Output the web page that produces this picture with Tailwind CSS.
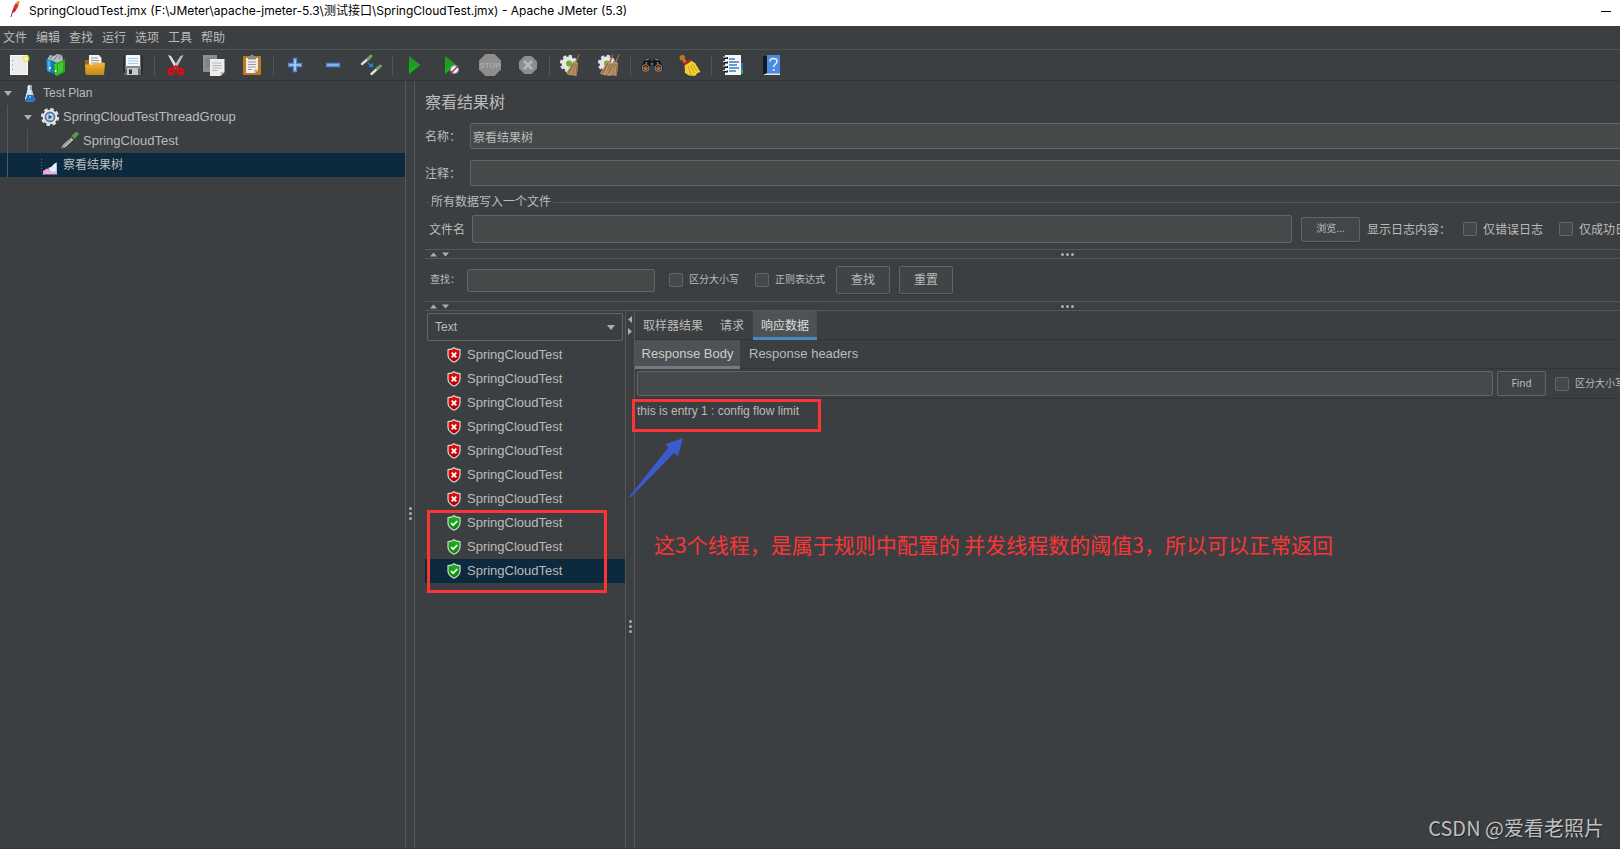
<!DOCTYPE html>
<html lang="zh-CN">
  <head>
    <meta charset="UTF-8" />
    <meta name="viewport" content="width=device-width, initial-scale=1.0" />
    <title>SpringCloudTest.jmx - Apache JMeter (5.3)</title>
    <script src="https://cdn.jsdelivr.net/npm/@tailwindcss/browser@4"></script>
  </head>
  <body class="relative flex h-screen flex-col overflow-hidden bg-[#3c3f41] font-['Liberation_Sans','Noto_Sans_CJK_SC',sans-serif] text-xs text-[#bbbbbb]">
    <!-- Shared icons -->
    <svg class="absolute size-0">
      <defs>
        <linearGradient id="red" x1="0" y1="0" x2="0" y2="1">
          <stop offset="0" stop-color="#e81212" />
          <stop offset="1" stop-color="#a80000" />
        </linearGradient>
        <linearGradient id="green" x1="0" y1="0" x2="0" y2="1">
          <stop offset="0" stop-color="#20b520" />
          <stop offset="1" stop-color="#078307" />
        </linearGradient>
        <linearGradient id="play" x1="0" y1="0" x2="0" y2="1">
          <stop offset="0" stop-color="#2f8f2f" />
          <stop offset="0.5" stop-color="#1ba01b" />
          <stop offset="1" stop-color="#09c409" />
        </linearGradient>
        <linearGradient id="gold" x1="0" y1="0" x2="0" y2="1">
          <stop offset="0" stop-color="#f0b63c" />
          <stop offset="1" stop-color="#c98612" />
        </linearGradient>
      </defs>
      <symbol id="fail" viewBox="0 0 14 16">
        <path d="M7 .8C5.300 2.200 3.200 2.600 1 2.700V8c0 3.300 2.500 5.700 6 7.200 3.500-1.500 6-3.900 6-7.200V2.700C10.800 2.600 8.700 2.200 7 .8z" fill="url(#red)" stroke="#d8d4d4" stroke-width="1.200" />
        <path d="M4.700 5.700l4.600 4.600M9.300 5.700l-4.600 4.600" stroke="#fff" stroke-width="1.800" />
      </symbol>
      <symbol id="pass" viewBox="0 0 14 16">
        <path d="M7 .8C5.300 2.200 3.200 2.600 1 2.700V8c0 3.300 2.500 5.700 6 7.200 3.500-1.500 6-3.900 6-7.200V2.700C10.800 2.600 8.700 2.200 7 .8z" fill="url(#green)" stroke="#ccd8cc" stroke-width="1.200" />
        <path d="M4 8l2.200 2.200L10.200 6" fill="none" stroke="#fff" stroke-width="1.700" />
      </symbol>
      <symbol id="gear" viewBox="0 0 20 20">
        <circle cx="10" cy="10" r="7.300" fill="#e6e6e6" />
        <circle cx="10" cy="10" r="7.800" fill="none" stroke="#e2e2e2" stroke-width="2.600" stroke-dasharray="3.500 2.626" />
      </symbol>
      <symbol id="brush" viewBox="0 0 14 22">
        <path d="M12.500 0l1 .6-3 8.400-1.600-.6z" fill="#8d7049" />
        <path d="M7.500 7l4.500 2-.3 6-1.200 7-3.300-.6L3 21l-3-1.800L4 13z" fill="#b8946a" />
        <path d="M8 9L3 20M9.500 10L6.500 21M11 10l-1 11M7 10l-5 9" stroke="#8a6640" stroke-width=".8" fill="none" />
      </symbol>
    </svg>

    <!-- Title bar -->
    <header class="flex h-[26px] shrink-0 items-center bg-white pr-[9px] pl-[9px] font-['Inter','Noto_Sans_CJK_SC',sans-serif] text-black">
      <svg class="mb-2 h-[18px] w-3" viewBox="0 0 12 18">
        <path d="M10.500 1C7.500 1.500 5.500 4 4.500 7.500L3.200 12l2 .3C7.500 10 10 6 10.500 1z" fill="#d9342b" />
        <path d="M10.500 1C9 1.200 7.700 2 6.700 3.300L9.600 5C10.100 3.700 10.400 2.300 10.500 1z" fill="#f0992a" />
        <path d="M4.300 8.500L3 12.300l2 .3 2.300-2.900z" fill="#b3245c" />
        <path d="M3.500 12L2 17" stroke="#6a2a6e" stroke-width="1" />
      </svg>
      <h1 class="mb-1 ml-2 flex-1 whitespace-nowrap leading-5">SpringCloudTest.jmx (F:\JMeter\apache-jmeter-5.3\测试接口\SpringCloudTest.jmx) - Apache JMeter (5.3)</h1>
      <button class="mb-1 flex h-4 w-5 items-center justify-center pl-[9px]" aria-label="Minimize"><span class="h-px w-[10px] shrink-0 bg-black"></span></button>
    </header>

    <!-- Menu -->
    <nav class="flex h-6 shrink-0 items-center gap-[9px] border-b border-[#515456] pl-[3px] whitespace-nowrap">
      <button>文件</button>
      <button>编辑</button>
      <button>查找</button>
      <button>运行</button>
      <button>选项</button>
      <button>工具</button>
      <button>帮助</button>
    </nav>

    <!-- Toolbar -->
    <div class="flex h-[31px] shrink-0 items-center border-b border-[#323537]">
      <button class="flex w-[38px] justify-center" aria-label="New">
        <svg class="size-6" viewBox="0 0 24 24">
          <rect x="3.500" y="2.500" width="17" height="19" fill="#ececec" stroke="#fafafa" />
          <path d="M5.500 7v1M5.500 11.500v1M5.500 16v1" stroke="#888" />
          <circle cx="19" cy="5.500" r="3.500" fill="#f3e34c" opacity=".75" />
          <circle cx="19" cy="5.500" r="1.500" fill="#fffbd0" />
        </svg>
      </button>
      <button class="flex w-[38px] justify-center" aria-label="Templates">
        <svg class="size-6" viewBox="0 0 24 24">
          <path d="M2 7l3-5 4 1 3-2 5 1 1 6-8 4z" fill="#b4bdc0" />
          <path d="M5 6l3-4M9 7l4-5M14 6l2-4" stroke="#6d777b" />
          <path d="M1 6l8 2v13l-7-3z" fill="#1278b8" />
          <path d="M2.500 7l3 1v11l-3-1z" fill="#45b2ea" />
          <path d="M9 9l4 1v13l-4-2z" fill="#0b6d18" />
          <path d="M9 11l4-1.500V23l-3-1z" fill="#3ec92c" />
          <path d="M12 10l8-4v13l-8 4z" fill="#28a51c" />
          <path d="M13 11l5-2.500V18l-5 3z" fill="#43c832" />
          <circle cx="5" cy="15" r="1" fill="#fff" />
          <circle cx="10.500" cy="18" r="1" fill="#fff" />
        </svg>
      </button>
      <button class="flex w-[38px] justify-center" aria-label="Open">
        <svg class="size-6" viewBox="0 0 24 24">
          <path d="M2 7h6l1 2h12v12H2z" fill="#9f6a0b" />
          <path d="M6 2h10l2.500 3v9H6z" fill="#f2f2f2" />
          <path d="M8 5h7M8 7.500h8M8 10h8" stroke="#9b9b9b" />
          <path d="M2 11.500h8l2-1.500h10l-1 12H3z" fill="url(#gold)" />
        </svg>
      </button>
      <button class="flex w-[38px] justify-center" aria-label="Save">
        <svg class="size-6" viewBox="0 0 24 24">
          <path d="M2 3h20v19H4l-2-2z" fill="#66696c" />
          <path d="M2 3h2v17H2zM20 3h2v19h-2z" fill="#2c2e30" />
          <path d="M4 13h16v3H4z" fill="#85888a" />
          <rect x="5" y="2" width="14" height="11" fill="#f3f8fc" />
          <path d="M7 5.500h10M7 8h10M7 10.500h10" stroke="#a9c8e2" />
          <rect x="6" y="15" width="11" height="7" fill="#c9c9c9" />
          <rect x="8" y="16.500" width="3" height="4.500" fill="#333" />
        </svg>
      </button>
      <span class="flex w-[5px] justify-center"><i class="h-[21px] w-px bg-[#515456]"></i></span>
      <button class="flex w-[38px] justify-center" aria-label="Cut">
        <svg class="size-6" viewBox="0 0 24 24">
          <path d="M4 2l3 1 7 11-2.500 2z" fill="#e2e2e2" />
          <path d="M19.500 2l-3 1-7 11 2.500 2z" fill="#bfbfbf" />
          <g fill="none" stroke="#d90e14" stroke-width="2.600">
            <ellipse cx="7" cy="18.500" rx="3" ry="2.600" transform="rotate(-35 7 18.500)" />
            <ellipse cx="16.500" cy="18.500" rx="3" ry="2.600" transform="rotate(35 16.500 18.500)" />
            <path d="M9 15.500l3-2 3 2" />
          </g>
        </svg>
      </button>
      <button class="flex w-[38px] justify-center" aria-label="Copy">
        <svg class="size-6" viewBox="0 0 24 24">
          <rect x="1" y="2" width="14" height="17" fill="#8d8f90" />
          <path d="M3.500 6h9M3.500 8.500h9M3.500 11h9M3.500 13.500h5" stroke="#707273" />
          <path d="M8 6h14.500v13l-4 4H8z" fill="#ededed" />
          <path d="M10.500 10h9M10.500 12.500h9M10.500 15h9M10.500 17.500h5" stroke="#b4b4b4" />
          <path d="M22.500 19h-4v4z" fill="#bdbdbd" />
        </svg>
      </button>
      <button class="flex w-[38px] justify-center" aria-label="Paste">
        <svg class="size-6" viewBox="0 0 24 24">
          <rect x="3" y="3" width="18" height="19" rx="1" fill="#c07a1c" />
          <path d="M6 5h12v12l-3 3H6z" fill="#f0f0f0" />
          <path d="M8 9h8M8 11.500h8M8 14h8M8 16.500h4" stroke="#9a9a9a" />
          <path d="M18 16.500h-3.500V20z" fill="#aaa" />
          <path d="M8 3.500h2C10 1 14 1 14 3.500h2v3H8z" fill="#8b8d85" />
        </svg>
      </button>
      <span class="flex w-[5px] justify-center"><i class="h-[21px] w-px bg-[#515456]"></i></span>
      <button class="flex w-[38px] justify-center" aria-label="Expand all">
        <svg class="size-6" viewBox="0 0 24 24">
          <path d="M10.500 5.500h3v5h5v3h-5v5h-3v-5h-5v-3h5z" fill="#b4cff2" stroke="#4a86d6" stroke-width="1.300" />
        </svg>
      </button>
      <button class="flex w-[38px] justify-center" aria-label="Collapse all">
        <svg class="size-6" viewBox="0 0 24 24">
          <path d="M5.500 10.500h13v3h-13z" fill="#9cbfec" stroke="#4a86d6" stroke-width="1.300" />
        </svg>
      </button>
      <button class="flex w-[38px] justify-center" aria-label="Toggle">
        <svg class="size-6" viewBox="0 0 24 24">
          <path d="M3 11l7-6" stroke="#dedede" stroke-width="2.400" stroke-linecap="round" />
          <path d="M9 6L12 3" stroke="#6fa45f" stroke-width="3" stroke-linecap="round" />
          <path d="M12.500 21l6-5.500" stroke="#dedede" stroke-width="2.400" stroke-linecap="round" />
          <path d="M18.500 15.500l3-2.500" stroke="#6fa45f" stroke-width="3" stroke-linecap="round" />
          <path d="M8.500 9.500l3 3" stroke="#2f7fe8" stroke-width="1.200" />
          <path d="M14 9.500V14H9.500z" fill="#2f7fe8" />
        </svg>
      </button>
      <span class="flex w-[5px] justify-center"><i class="h-[21px] w-px bg-[#515456]"></i></span>
      <button class="flex w-[38px] justify-center" aria-label="Start">
        <svg class="size-6" viewBox="0 0 24 24"><path d="M7 3l11.500 9L7 21z" fill="url(#play)" /></svg>
      </button>
      <button class="flex w-[38px] justify-center" aria-label="Start no pauses">
        <svg class="size-6" viewBox="0 0 24 24">
          <path d="M5 3l11.500 9L5 21z" fill="url(#play)" />
          <circle cx="14.500" cy="16.500" r="4" fill="#eef4fb" stroke="#5f95cf" />
          <path d="M10.500 20.500l8-8" stroke="#d52222" stroke-width="1.500" />
        </svg>
      </button>
      <button class="flex w-[38px] justify-center" aria-label="Stop">
        <svg class="size-6" viewBox="0 0 24 24">
          <path d="M7.500 1h9L23 7.500v9L16.500 23h-9L1 16.500v-9z" fill="#8e8e8e" />
          <text x="12" y="15" text-anchor="middle" font-size="8" font-weight="bold" fill="#a9a9a9">STOP</text>
        </svg>
      </button>
      <button class="flex w-[38px] justify-center" aria-label="Shutdown">
        <svg class="size-6" viewBox="0 0 24 24">
          <path d="M8.500 3h7L21 8.500v7L15.500 21h-7L3 15.500v-7z" fill="#8e8e8e" />
          <path d="M8 8l8 8M16 8l-8 8" stroke="#b5b5b5" stroke-width="2.800" />
        </svg>
      </button>
      <span class="flex w-[5px] justify-center"><i class="h-[21px] w-px bg-[#515456]"></i></span>
      <button class="flex w-[38px] justify-center" aria-label="Clear">
        <svg class="size-6" viewBox="0 0 24 24">
          <use href="#gear" x="0" y="1" width="19" height="19" />
          <circle cx="10" cy="10.500" r="3" fill="#63b62b" />
          <use href="#brush" x="7" y="1" width="14" height="22" />
        </svg>
      </button>
      <button class="flex w-[38px] justify-center" aria-label="Clear all">
        <svg class="size-6" viewBox="0 0 24 24">
          <use href="#gear" x="0" y="1" width="19" height="19" />
          <circle cx="10" cy="10.500" r="3" fill="#63b62b" />
          <use href="#brush" x="3" y="1" width="14" height="22" />
          <use href="#brush" x="9" y="1" width="14" height="22" />
        </svg>
      </button>
      <span class="flex w-[5px] justify-center"><i class="h-[21px] w-px bg-[#515456]"></i></span>
      <button class="flex w-[38px] justify-center" aria-label="Search">
        <svg class="size-6" viewBox="0 0 24 24">
          <path d="M5 6l4-1 2 3h2l2-3 4 1 4 8v3h-7l-2-4h-4l-2 4H1v-3z" fill="#171717" />
          <path d="M5.500 7l3.500-1M15 6l3.500 1M7 9l-2 3M17 9l2 3" stroke="#a5a5a5" />
          <circle cx="5.500" cy="15" r="3.400" fill="#1b1b1b" stroke="#8b8b8b" />
          <circle cx="18.500" cy="15" r="3.400" fill="#1b1b1b" stroke="#8b8b8b" />
          <circle cx="5.500" cy="15.500" r="2.300" fill="#b4602b" />
          <circle cx="18.500" cy="15.500" r="2.300" fill="#b4602b" />
          <circle cx="12" cy="11" r="1.500" fill="#666" />
        </svg>
      </button>
      <button class="flex w-[38px] justify-center" aria-label="Clear search">
        <svg class="size-6" viewBox="0 0 24 24">
          <path d="M1.500 3.500L4 1.500 7 3v3l2.500 3-3 2L4 7.500 2 7z" fill="#bf7420" />
          <path d="M6.500 10.500L12 7l5 3 5.500 9-3 1-2.500 3-6-.5L7 20z" fill="#f0d033" />
          <path d="M10 13l3 9M12.500 12l4 8M14 11l5 7" stroke="#c7a31b" />
          <path d="M6 11.500l6.500-4" stroke="#c3211d" stroke-width="2.500" />
        </svg>
      </button>
      <span class="flex w-[5px] justify-center"><i class="h-[21px] w-px bg-[#515456]"></i></span>
      <button class="flex w-[38px] justify-center" aria-label="Function helper">
        <svg class="size-6" viewBox="0 0 24 24">
          <path d="M18 10h4v6h-4z" fill="#2071cf" />
          <path d="M18 16h4v5h-4z" fill="#2ca53b" />
          <rect x="4" y="2" width="16" height="20" fill="#f6f6f6" />
          <path d="M8 6h6M8 9h10M8 12h8M8 15h10M8 18h7" stroke="#3b7dc9" stroke-width="1.300" />
          <path d="M3 5h4M3 9.500h4M3 14h4M3 18.500h4" stroke="#17191a" stroke-width="2" />
          <path d="M2 4h4M2 8.500h4M2 13h4M2 17.500h4" stroke="#ddd" />
        </svg>
      </button>
      <button class="flex w-[38px] justify-center" aria-label="Help">
        <svg class="size-6" viewBox="0 0 24 24">
          <path d="M4 3h4v19H4z" fill="#15181d" />
          <path d="M8 2h13v19H8z" fill="#4a8be0" />
          <path d="M4 22l3-1.500h14V22z" fill="#e5e5e5" />
          <path d="M11 8.500c0-4 7-4 7 0 0 2.500-3.300 2.500-3.300 5.500" fill="none" stroke="#e8f1ff" stroke-width="1.500" />
          <circle cx="14.700" cy="17" r="1.100" fill="#e8f1ff" />
        </svg>
      </button>
    </div>

    <!-- Work area: runs on below the window's lower edge -->
    <div class="flex h-[calc(100vh+16px)] shrink-0">
      <!-- Test plan tree -->
      <aside class="w-[405px] shrink-0">
        <ul class="relative">
          <li class="flex h-6 items-center">
            <span class="w-5 pl-1"><svg class="h-[5px] w-2" viewBox="0 0 8 5"><path d="M0 0h8L4 5z" fill="#adadad" /></svg></span>
            <svg class="size-5" viewBox="0 0 20 20">
              <path d="M8 2h4v5l3 10c0 1-1 1.500-5 1.500S5 18 5 17L8 7z" fill="#c9d3dc" />
              <path d="M6.500 12h7l1.500 5c0 1-1 1.500-5 1.500S5 18 5 17z" fill="#2272cf" />
              <path d="M8 3v4l-2.500 9M10 3v8" stroke="#fff" stroke-width="1" fill="none" />
              <path d="M11 2v5" stroke="#6c7983" />
              <circle cx="10" cy="14" r="1" fill="#8fc1f2" />
            </svg>
            <span class="ml-[3px]">Test Plan</span>
          </li>
          <li class="flex h-6 items-center pl-5">
            <span class="w-5 pl-1"><svg class="h-[5px] w-2" viewBox="0 0 8 5"><path d="M0 0h8L4 5z" fill="#adadad" /></svg></span>
            <svg class="size-5" viewBox="0 0 20 20">
              <use href="#gear" width="20" height="20" />
              <circle cx="10" cy="10" r="4.500" fill="#cfdcec" stroke="#5579a8" stroke-width="1.800" />
              <path d="M8.500 7.500l4 2.500-4 2.500z" fill="#31588e" />
            </svg>
            <span class="ml-[3px] text-[13px]">SpringCloudTestThreadGroup</span>
          </li>
          <li class="flex h-6 items-center pl-[60px]">
            <svg class="size-5" viewBox="0 0 20 20">
              <path d="M1.500 17l2-3.500 8-7 2 2-8 7.500z" fill="#d6dad6" stroke="#7e827e" stroke-width=".8" />
              <path d="M3.500 15.500l8-7.500" stroke="#6a6e6a" />
              <path d="M11 5.500l3.500-3.500c2-2 5-.5 4 1.500L14.500 8z" fill="#5a9c4b" />
              <path d="M10.500 5l4.500 4.500" stroke="#2f5a28" stroke-width="1.500" />
            </svg>
            <span class="ml-[3px] text-[13px]">SpringCloudTest</span>
          </li>
          <li class="flex h-6 items-center bg-[#0d293e] pl-10">
            <svg class="size-5" viewBox="0 0 20 20">
              <path d="M1.500 4v15" stroke="#5a7282" stroke-dasharray="1 2" />
              <path d="M2 19.500h15" stroke="#5a7282" />
              <path d="M9 14c3 0 3-6 8-6.500V19H9z" fill="#9cc8f0" />
              <path d="M3 19v-3l4-2.500 5 2.500 4 1v2z" fill="#f2a8dc" />
              <path d="M8 13l3-1 5-4v8l-4 1z" fill="#e4f0fb" />
            </svg>
            <span class="ml-[3px]">察看结果树</span>
          </li>
          <i class="absolute top-6 left-[7px] h-[72px] w-px bg-[#515a60]"></i>
          <i class="absolute top-12 left-[27px] h-6 w-px bg-[#515456]"></i>
        </ul>
      </aside>

      <div class="flex w-[10px] shrink-0 flex-col items-center justify-center gap-[2px] border-x border-[#555758]">
        <i class="size-[3px] rounded-full bg-[#adadad]"></i>
        <i class="size-[3px] rounded-full bg-[#adadad]"></i>
        <i class="size-[3px] rounded-full bg-[#adadad]"></i>
      </div>

      <!-- View Results Tree -->
      <main class="ml-[10px] flex w-[calc(100%-335px)] shrink-0 flex-col pt-2 pb-1 whitespace-nowrap">
        <h2 class="h-[26px] text-base leading-7">察看结果树</h2>
        <div class="mt-2 flex h-[26px] items-center">
          <label for="name" class="w-[45px] pt-px">名称：</label>
          <input id="name" type="text" value="察看结果树" class="h-full flex-1 rounded-[2px] border border-[#646464] bg-[#45494a] px-[2px]" />
        </div>
        <div class="mt-[11px] flex h-[26px] items-center">
          <label for="comment" class="w-[45px] pt-px">注释：</label>
          <input id="comment" type="text" class="h-full flex-1 rounded-[2px] border border-[#646464] bg-[#45494a] px-[2px]" />
        </div>

        <fieldset class="mt-[6px] ml-[2px] min-w-0 border-t border-[#555758]">
          <legend class="ml-[2px] h-5 px-[2px] leading-5">所有数据写入一个文件</legend>
          <div class="mt-[3px] flex h-7 items-center pr-1 pl-[2px]">
            <label for="file" class="w-[43px] pt-px">文件名</label>
            <input id="file" type="text" class="h-full flex-1 rounded-[2px] border border-[#646464] bg-[#45494a] px-[2px]" />
            <button class="ml-[9px] h-[25px] w-[59px] rounded-[2px] border border-[#646464] bg-[#40464a] text-[10px] shadow-[0_1px_0_#323537]">浏览...</button>
            <span class="ml-[7px] w-24 pt-px">显示日志内容：</span>
            <input id="errors" type="checkbox" class="size-[14px] appearance-none rounded-[2px] border border-[#646464] bg-[#43494a]" />
            <label for="errors" class="ml-[6px] pt-px">仅错误日志</label>
            <input id="successes" type="checkbox" class="ml-4 size-[14px] appearance-none rounded-[2px] border border-[#646464] bg-[#43494a]" />
            <label for="successes" class="ml-[6px] pt-px">仅成功日志</label>
            <button class="ml-[15px] h-[25px] w-[52px] rounded-[2px] border border-[#646464] bg-[#40464a]">配置</button>
          </div>
        </fieldset>

        <div class="relative mt-[6px] flex h-[10px] shrink-0 items-center justify-center gap-[2px] border-y border-[#555758]">
          <svg class="absolute top-[2px] left-[5px] h-[5px] w-[19px]" viewBox="0 0 19 5"><path d="M0 4.500h7L3.500.5zM12 .5h7l-3.500 4z" fill="#adadad" /></svg>
          <i class="size-[3px] rounded-full bg-[#adadad]"></i>
          <i class="size-[3px] rounded-full bg-[#adadad]"></i>
          <i class="size-[3px] rounded-full bg-[#adadad]"></i>
        </div>

        <!-- Search in results -->
        <div class="flex h-[42px] shrink-0 items-center pl-[5px]">
          <label for="search" class="w-[37px] text-[10px]">查找：</label>
          <input id="search" type="text" class="h-[23px] w-[188px] rounded-[2px] border border-[#646464] bg-[#45494a] px-[2px]" />
          <input id="case" type="checkbox" class="ml-[14px] size-[14px] appearance-none rounded-[2px] border border-[#646464] bg-[#43494a]" />
          <label for="case" class="ml-[6px] text-[10px]">区分大小写</label>
          <input id="regex" type="checkbox" class="ml-4 size-[14px] appearance-none rounded-[2px] border border-[#646464] bg-[#43494a]" />
          <label for="regex" class="ml-[6px] text-[10px]">正则表达式</label>
          <button class="ml-[11px] h-7 w-[54px] rounded-[2px] border border-[#646464] bg-[#404446] shadow-[0_1px_0_#323537]">查找</button>
          <button class="ml-[9px] h-7 w-[54px] rounded-[2px] border border-[#646464] bg-[#404446] shadow-[0_1px_0_#323537]">重置</button>
        </div>

        <div class="relative flex h-[10px] shrink-0 items-center justify-center gap-[2px] border-y border-[#555758]">
          <svg class="absolute top-[2px] left-[5px] h-[5px] w-[19px]" viewBox="0 0 19 5"><path d="M0 4.500h7L3.500.5zM12 .5h7l-3.500 4z" fill="#adadad" /></svg>
          <i class="size-[3px] rounded-full bg-[#adadad]"></i>
          <i class="size-[3px] rounded-full bg-[#adadad]"></i>
          <i class="size-[3px] rounded-full bg-[#adadad]"></i>
        </div>

        <div class="flex min-h-0 flex-1">
          <section class="w-[200px] shrink-0">
            <div class="relative m-[2px] h-7">
              <select aria-label="Renderer" class="h-full w-full appearance-none rounded-[2px] border border-[#646464] bg-[#3c3f41] px-[7px]">
                <option>Text</option>
              </select>
              <svg class="pointer-events-none absolute top-3 right-2 h-[5px] w-2" viewBox="0 0 8 5"><path d="M0 0h8L4 5z" fill="#adadad" /></svg>
            </div>
            <ul class="text-[13px]">
              <li class="flex h-6 items-center gap-[6px] pl-[22px]"><svg class="h-4 w-[14px]"><use href="#fail" /></svg>SpringCloudTest</li>
              <li class="flex h-6 items-center gap-[6px] pl-[22px]"><svg class="h-4 w-[14px]"><use href="#fail" /></svg>SpringCloudTest</li>
              <li class="flex h-6 items-center gap-[6px] pl-[22px]"><svg class="h-4 w-[14px]"><use href="#fail" /></svg>SpringCloudTest</li>
              <li class="flex h-6 items-center gap-[6px] pl-[22px]"><svg class="h-4 w-[14px]"><use href="#fail" /></svg>SpringCloudTest</li>
              <li class="flex h-6 items-center gap-[6px] pl-[22px]"><svg class="h-4 w-[14px]"><use href="#fail" /></svg>SpringCloudTest</li>
              <li class="flex h-6 items-center gap-[6px] pl-[22px]"><svg class="h-4 w-[14px]"><use href="#fail" /></svg>SpringCloudTest</li>
              <li class="flex h-6 items-center gap-[6px] pl-[22px]"><svg class="h-4 w-[14px]"><use href="#fail" /></svg>SpringCloudTest</li>
              <li class="flex h-6 items-center gap-[6px] pl-[22px]"><svg class="h-4 w-[14px]"><use href="#pass" /></svg>SpringCloudTest</li>
              <li class="flex h-6 items-center gap-[6px] pl-[22px]"><svg class="h-4 w-[14px]"><use href="#pass" /></svg>SpringCloudTest</li>
              <li class="flex h-6 items-center gap-[6px] bg-[#0d293e] pl-[22px]"><svg class="h-4 w-[14px]"><use href="#pass" /></svg>SpringCloudTest</li>
            </ul>
          </section>

          <div class="relative flex w-[10px] shrink-0 flex-col items-center justify-center gap-[2px] border-x border-[#555758]">
            <svg class="absolute top-[5px] left-[2px] h-[19px] w-1" viewBox="0 0 4 19"><path d="M4 0v7L0 3.500zM0 12v7l4-3.500z" fill="#adadad" /></svg>
            <i class="size-[3px] rounded-full bg-[#adadad]"></i>
            <i class="size-[3px] rounded-full bg-[#adadad]"></i>
            <i class="size-[3px] rounded-full bg-[#adadad]"></i>
          </div>

          <section class="min-w-0 flex-1">
            <div class="flex h-[29px] gap-px border-b border-[#323537]">
              <button class="h-[29px] px-2">取样器结果</button>
              <button class="h-[29px] px-2">请求</button>
              <button class="h-[29px] border-b-[3px] border-[#4a88c7] bg-[#4e5254] px-2 pt-[3px] text-[#dddddd]">响应数据</button>
            </div>
            <div class="flex h-[29px] border-b border-[#323537] text-[13px]">
              <button class="h-[29px] w-[105px] border-b-[3px] border-[#747a80] bg-[#4e5254] pt-px text-[#cccccc]">Response Body</button>
              <button class="h-[29px] px-[9px] pb-[2px]">Response headers</button>
            </div>
            <div class="flex h-[30px] items-center border-b border-[#323537] pl-[2px]">
              <input type="text" aria-label="Find in response" class="h-[25px] flex-1 rounded-[2px] border border-[#646464] bg-[#45494a] px-[2px]" />
              <button class="ml-1 h-[25px] w-[49px] rounded-[2px] border border-[#646464] bg-[#404446] font-['Noto_Sans'] text-[10px]">Find</button>
              <input id="body-case" type="checkbox" class="ml-[9px] size-[14px] appearance-none rounded-[2px] border border-[#646464] bg-[#43494a]" />
              <label for="body-case" class="ml-[6px] text-[10px]">区分大小写</label>
              <input id="body-regex" type="checkbox" class="ml-[15px] size-[14px] appearance-none rounded-[2px] border border-[#646464] bg-[#43494a]" />
              <label for="body-regex" class="ml-[6px] text-[10px]">正则表达式</label>
            </div>
            <p class="pt-1 pl-[2px] leading-4">this is entry 1 : config flow limit</p>
          </section>
        </div>
      </main>
    </div>

    <!-- Notes drawn over the window -->
    <div class="pointer-events-none absolute inset-0 overflow-hidden font-['Noto_Sans_CJK_SC',sans-serif] whitespace-nowrap">
      <div class="absolute top-[399px] left-[632px] h-[33px] w-[189px] border-3 border-[#fb3535]"></div>
      <div class="absolute top-[510px] left-[427px] h-[83px] w-[180px] border-3 border-[#fb3535]"></div>
      <svg class="absolute top-[438px] left-[629px] h-[61px] w-[55px]" viewBox="0 0 55 61">
        <path d="M54 0L49 18l-4-3L1 60l-1-1L39 10l-2-4z" fill="#3a5bd0" />
      </svg>
      <p class="absolute top-[528px] left-[654px] text-[21px] leading-8 text-[#fb3535]">这3个线程，是属于规则中配置的 并发线程数的阈值3，所以可以正常返回</p>
      <p class="absolute right-4 bottom-[5px] text-xl leading-8 text-[#bfc0c1] text-shadow-[1px_1px_1px_#222]">CSDN @爱看老照片</p>
      <i class="absolute inset-x-0 bottom-0 h-px bg-[#323537]"></i>
    </div>
  </body>
</html>
